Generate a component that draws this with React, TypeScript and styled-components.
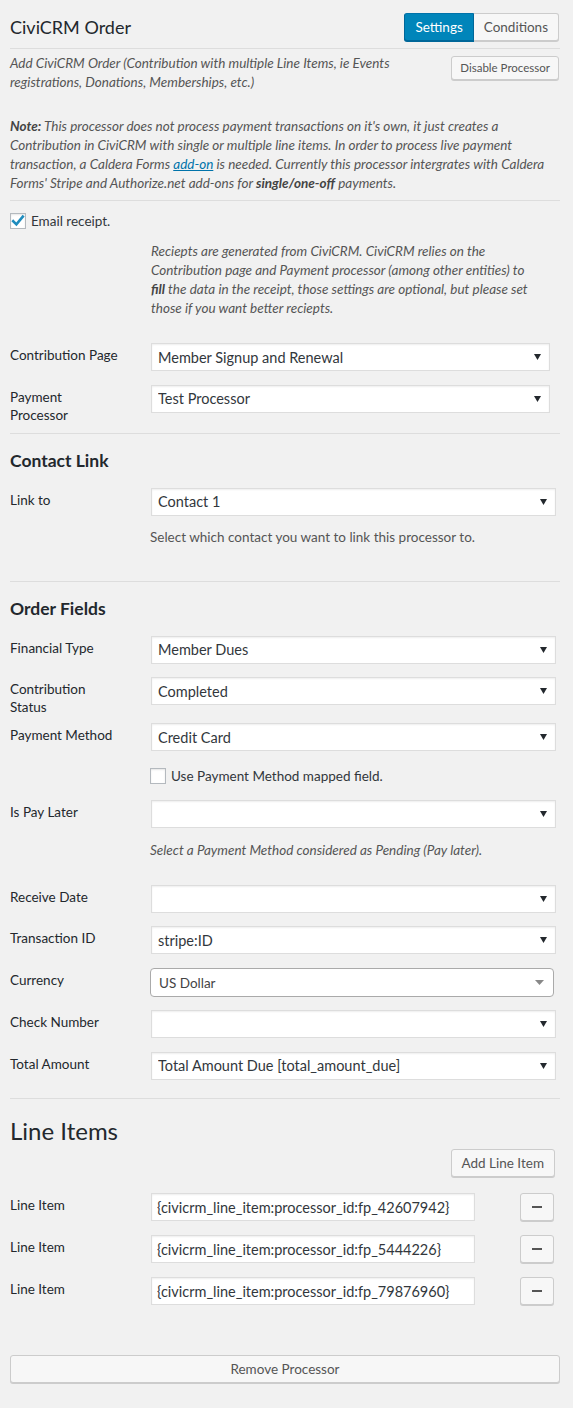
import React from "react";
import styled, { createGlobalStyle, css } from "styled-components";

const GlobalStyle = createGlobalStyle`
  html, body {
    margin: 0;
    padding: 0;
    background: #f1f1f1;
  }
  body {
    font-family: Lato, "Liberation Sans", sans-serif;
    font-size: 13.5px;
    color: #444;
  }
  * {
    box-sizing: border-box;
  }
  button, input, select {
    font-family: inherit;
  }
`;

const Panel = styled.div`
  display: flex;
  flex-direction: column;
  padding: 0 13px 24px 10px;
  min-height: 1408px;
`;

const TitleBar = styled.div`
  display: flex;
  align-items: center;
  justify-content: space-between;
  padding: 13px 1px 7px 0;
  border-bottom: 1px solid #ddd;
`;

const ProcessorTitle = styled.h2`
  margin: 0;
  font-size: 18px;
  font-weight: 400;
  line-height: 28px;
  color: #23282d;
`;

const ButtonGroup = styled.div`
  display: flex;
`;

const buttonBase = css`
  height: 28px;
  padding: 0 10px;
  font-size: 13.5px;
  line-height: 26px;
  border: 1px solid #ccc;
  background: #f7f7f7;
  color: #555;
  box-shadow: 0 1px 0 #ccc;
  border-radius: 3px;
  cursor: pointer;
`;

const TabButton = styled.button<{ $active?: boolean }>`
  ${buttonBase};
  &:first-child {
    border-radius: 3px 0 0 3px;
  }
  &:last-child {
    border-radius: 0 3px 3px 0;
    border-left: 0;
  }
  ${({ $active }) =>
    $active &&
    css`
      background: #0085ba;
      border-color: #0073aa #006799 #006799;
      color: #fff;
      box-shadow: 0 1px 0 #006799;
    `}
`;

const DescRow = styled.div`
  display: flex;
  align-items: flex-start;
  justify-content: space-between;
  padding-top: 5px;
`;

const Description = styled.p`
  margin: 0;
  width: 420px;
  font-style: italic;
  line-height: 19px;
  color: #555;
`;

const SmallButton = styled.button`
  ${buttonBase};
  height: 24px;
  line-height: 22px;
  padding: 0 8px;
  font-size: 11.5px;
  margin: 2px 1px 0 0;
`;

const Note = styled.p`
  margin: 25px 0 7px;
  font-style: italic;
  line-height: 19px;
  color: #555;

  b {
    color: #444;
  }
  a {
    color: #0073aa;
  }
`;

const Divider = styled.hr<{ $top?: number }>`
  margin: ${({ $top = 0 }) => $top}px 0 0;
  border: 0;
  border-top: 1px solid #ddd;
  height: 0;
`;

const CheckRow = styled.label<{ $indent?: boolean; $top?: number; $bottom?: number }>`
  display: flex;
  align-items: center;
  gap: 5px;
  height: 20px;
  margin: ${({ $top = 0 }) => $top}px 0 ${({ $bottom = 0 }) => $bottom}px;
  padding-left: ${({ $indent }) => ($indent ? "140px" : "0")};
  color: #32373c;
  line-height: 20px;
`;

const CheckBox = styled.span`
  display: inline-flex;
  align-items: center;
  justify-content: center;
  width: 16px;
  height: 16px;
  background: #fff;
  border: 1px solid #b4b9be;
  box-shadow: inset 0 1px 2px rgba(0, 0, 0, 0.1);
`;

const HelpText = styled.p<{ $italic?: boolean; $top?: number; $bottom?: number }>`
  margin: ${({ $top = 0 }) => $top}px 0 ${({ $bottom = 0 }) => $bottom}px 140px;
  line-height: 19px;
  color: #555;
  font-style: ${({ $italic }) => ($italic ? "italic" : "normal")};

  b {
    color: #444;
  }
`;

const ReceiptHelp = styled(HelpText)`
  padding-left: 1px;
  padding-right: 21px;
`;

const FieldRow = styled.div`
  display: flex;
  align-items: flex-start;
  margin-bottom: 13.5px;
`;

const FieldLabel = styled.label`
  flex: 0 0 141px;
  padding: 3px 31px 0 0;
  margin-bottom: -6.5px;
  line-height: 18px;
  color: #23282d;
`;

const SelectWrap = styled.div<{ $right?: number }>`
  position: relative;
  flex: 1;
  margin-right: ${({ $right = 4 }) => $right}px;
`;

const SelectField = styled.select`
  appearance: none;
  display: block;
  width: 100%;
  height: 28px;
  margin: 0;
  padding: 0 24px 0 6px;
  border: 1px solid #ddd;
  border-radius: 0;
  background: #fff;
  box-shadow: inset 0 1px 2px rgba(0, 0, 0, 0.07);
  font-size: 14.5px;
  color: #32373c;
  outline: none;
`;

const Caret = styled.svg<{ $combo?: boolean }>`
  position: absolute;
  right: ${({ $combo }) => ($combo ? "10px" : "9px")};
  top: ${({ $combo }) => ($combo ? "12px" : "11px")};
  pointer-events: none;
`;

const ComboWrap = styled.div`
  position: relative;
  flex: 1;
  margin: 0 6px 0 -1px;
`;

const ComboBox = styled.div`
  height: 29px;
  padding: 0 24px 0 8px;
  border: 1px solid #aaa;
  border-radius: 4px;
  background: #fff;
  font-size: 13.5px;
  line-height: 29px;
  color: #444;
`;

const SectionHeading = styled.h3`
  margin: 16px 0 16px;
  font-size: 17.5px;
  font-weight: 700;
  line-height: 22px;
  color: #23282d;
`;

const LineItemsHeading = styled.h2`
  margin: 16.5px 0 4.5px;
  font-size: 24px;
  font-weight: 400;
  line-height: 29px;
  color: #23282d;
`;

const AddBar = styled.div`
  display: flex;
  justify-content: flex-end;
  padding-right: 5px;
  margin-bottom: 16px;
`;

const ActionButton = styled.button`
  ${buttonBase};
`;

const LineRow = styled.div`
  display: flex;
  align-items: flex-start;
  margin-bottom: 14px;
`;

const TextInput = styled.input`
  width: 324px;
  height: 28px;
  margin: 0;
  padding: 0 5px;
  border: 1px solid #ddd;
  background: #fff;
  box-shadow: inset 0 1px 2px rgba(0, 0, 0, 0.07);
  font-size: 14.5px;
  color: #32373c;
  outline: none;
`;

const MinusButton = styled.button`
  ${buttonBase};
  display: flex;
  align-items: center;
  justify-content: center;
  width: 34px;
  padding: 0;
  margin: 0 6px 0 auto;
`;

const RemoveButton = styled.button`
  ${buttonBase};
  display: block;
  width: 100%;
  margin-top: 36px;
`;

type SelectProps = {
  label: string;
  value: string;
  right?: number;
};

const SelectRow = ({ label, value, right }: SelectProps) => (
  <FieldRow>
    <FieldLabel>{label}</FieldLabel>
    <SelectWrap $right={right}>
      <SelectField defaultValue={value}>
        <option value={value}>{value}</option>
      </SelectField>
      <Caret width="7" height="6" viewBox="0 0 7 6">
        <polygon points="0,0 7,0 3.5,6" fill="#23282d" />
      </Caret>
    </SelectWrap>
  </FieldRow>
);

const CheckMark = () => (
  <svg width="14" height="14" viewBox="0 0 14 14">
    <path d="M2.2 7.2 L5.4 10.4 L11.8 2.6" fill="none" stroke="#1e8cbe" strokeWidth="2.6" strokeLinecap="square" />
  </svg>
);

const lineItems = [
  "{civicrm_line_item:processor_id:fp_42607942}",
  "{civicrm_line_item:processor_id:fp_5444226}",
  "{civicrm_line_item:processor_id:fp_79876960}",
];

const App = () => (
  <>
    <GlobalStyle />
    <Panel>
      <TitleBar>
        <ProcessorTitle>CiviCRM Order</ProcessorTitle>
        <ButtonGroup>
          <TabButton $active>Settings</TabButton>
          <TabButton>Conditions</TabButton>
        </ButtonGroup>
      </TitleBar>

      <DescRow>
        <Description>
          Add CiviCRM Order (Contribution with multiple Line Items, ie Events registrations, Donations, Memberships, etc.)
        </Description>
        <SmallButton>Disable Processor</SmallButton>
      </DescRow>

      <Note>
        <b>Note:</b> This processor does not process payment transactions on it's own, it just creates a Contribution in
        CiviCRM with single or multiple line items. In order to process live payment transaction, a Caldera Forms{" "}
        <a href="#add-on">add-on</a> is needed. Currently this processor intergrates with Caldera Forms' Stripe and
        Authorize.net add-ons for <b>single/one-off</b> payments.
      </Note>
      <Divider />

      <CheckRow $top={10}>
        <CheckBox>
          <CheckMark />
        </CheckBox>
        Email receipt.
      </CheckRow>

      <ReceiptHelp $italic $top={10.5} $bottom={25.5}>
        Reciepts are generated from CiviCRM. CiviCRM relies on the Contribution page and Payment processor (among other
        entities) to <b>fill</b> the data in the receipt, those settings are optional, but please set those if you want
        better reciepts.
      </ReceiptHelp>

      <SelectRow label="Contribution Page" value="Member Signup and Renewal" right={10} />
      <SelectRow label="Payment Processor" value="Test Processor" right={10} />

      <Divider $top={2} />
      <SectionHeading>Contact Link</SectionHeading>
      <SelectRow label="Link to" value="Contact 1" />
      <HelpText $top={-1} $bottom={33.5}>
        Select which contact you want to link this processor to.
      </HelpText>

      <Divider />
      <SectionHeading>Order Fields</SectionHeading>
      <SelectRow label="Financial Type" value="Member Dues" />
      <SelectRow label="Contribution Status" value="Completed" />
      <SelectRow label="Payment Method" value="Credit Card" />
      <CheckRow $indent $top={1.5} $bottom={14}>
        <CheckBox />
        Use Payment Method mapped field.
      </CheckRow>
      <SelectRow label="Is Pay Later" value="" />
      <HelpText $italic $top={-1} $bottom={25}>
        Select a Payment Method considered as Pending (Pay later).
      </HelpText>
      <SelectRow label="Receive Date" value="" />
      <SelectRow label="Transaction ID" value="stripe:ID" />
      <FieldRow>
        <FieldLabel>Currency</FieldLabel>
        <ComboWrap>
          <ComboBox>US Dollar</ComboBox>
          <Caret $combo width="9" height="5" viewBox="0 0 9 5">
            <polygon points="0,0 9,0 4.5,5" fill="#888" />
          </Caret>
        </ComboWrap>
      </FieldRow>
      <SelectRow label="Check Number" value="" />
      <SelectRow label="Total Amount" value="Total Amount Due [total_amount_due]" />

      <Divider $top={5} />
      <LineItemsHeading>Line Items</LineItemsHeading>
      <AddBar>
        <ActionButton>Add Line Item</ActionButton>
      </AddBar>
      {lineItems.map((item) => (
        <LineRow key={item}>
          <FieldLabel>Line Item</FieldLabel>
          <TextInput defaultValue={item} />
          <MinusButton aria-label="Remove line item">
            <svg width="10" height="2" viewBox="0 0 10 2">
              <rect width="10" height="2" fill="#555" />
            </svg>
          </MinusButton>
        </LineRow>
      ))}

      <RemoveButton>Remove Processor</RemoveButton>
    </Panel>
  </>
);

export default App;
